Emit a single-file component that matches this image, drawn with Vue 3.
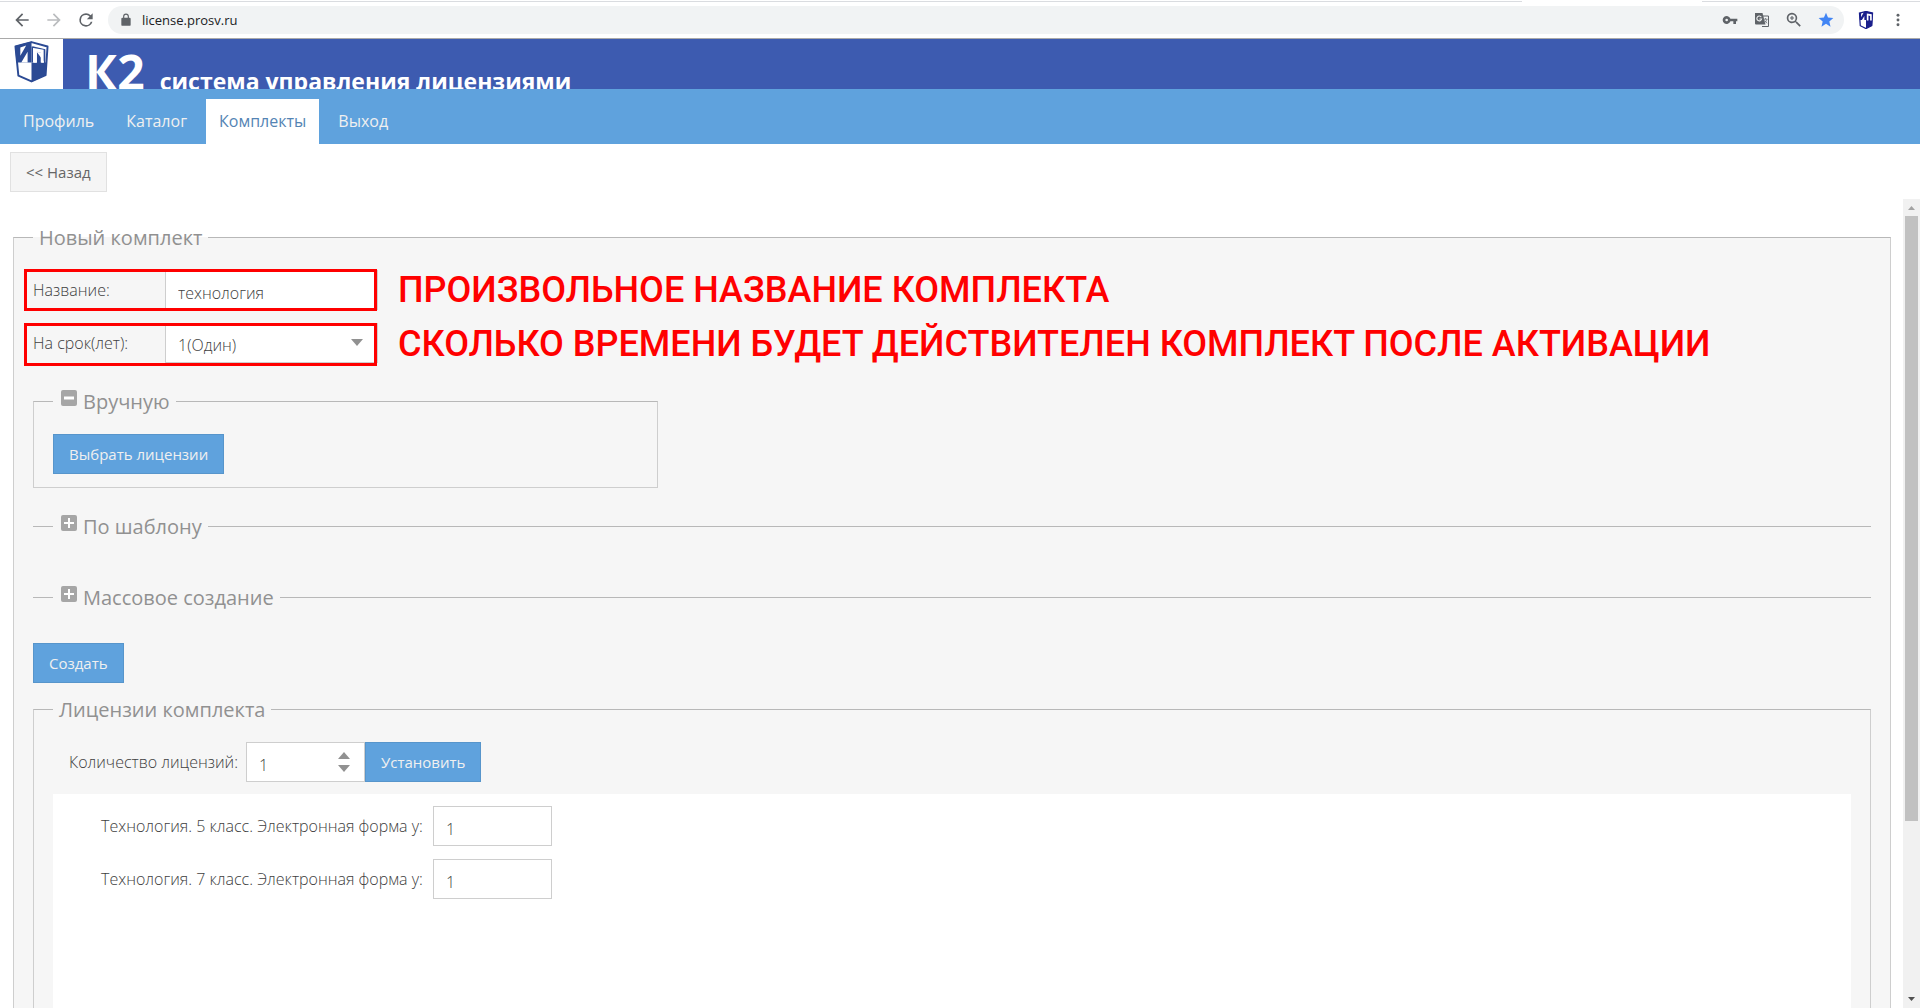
<script setup>
import { ref } from 'vue'

const tabs = ['Профиль', 'Каталог', 'Комплекты', 'Выход']
const active = ref('Комплекты')
const address = ref('license.prosv.ru')
const name = ref('технология')
const term = ref('1(Один)')
const count = ref('1')
const licenses = ref([
  { id: 'lic5', label: 'Технология. 5 класс. Электронная форма у:', value: '1' },
  { id: 'lic7', label: 'Технология. 7 класс. Электронная форма у:', value: '1' }
])
</script>

<template>
  <div class="page">
    <div class="browser">
      <div class="tabline"><span></span><span></span></div>
      <button class="tool" aria-label="Back"><svg viewBox="0 0 24 24" fill="#5f6368"><path d="M20 11H7.8l5.6-5.6L12 4l-8 8 8 8 1.4-1.4L7.8 13H20z" /></svg></button>
      <button class="tool" aria-label="Forward"><svg viewBox="0 0 24 24" fill="#babcbe"><path d="M12 4l-1.4 1.4 5.6 5.6H4v2h12.2l-5.6 5.6L12 20l8-8z" /></svg></button>
      <button class="tool" aria-label="Reload"><svg viewBox="0 0 24 24" fill="#5f6368"><path d="M17.65 6.35A7.96 7.96 0 0 0 12 4a8 8 0 1 0 7.73 10h-2.08A6 6 0 1 1 12 6c1.66 0 3.14.69 4.22 1.78L13 11h7V4z" /></svg></button>
      <div class="omnibox">
        <svg class="lock" viewBox="0 0 24 24" fill="#5f6368"><path d="M18 8h-1V6A5 5 0 0 0 7 6v2H6a2 2 0 0 0-2 2v10a2 2 0 0 0 2 2h12a2 2 0 0 0 2-2V10a2 2 0 0 0-2-2zM9 8V6a3 3 0 0 1 6 0v2z" /></svg>
        <input v-model="address" class="address" aria-label="Address" />
        <button class="mini" aria-label="Password"><svg viewBox="0 0 24 24" fill="#5f6368"><path d="M12.65 10A6 6 0 1 0 12.65 14H17v4h4v-4h2v-4zM7 14a2 2 0 1 1 0-4 2 2 0 0 1 0 4z" /></svg></button>
        <button class="mini" aria-label="Translate">
          <svg viewBox="0 0 16 16"><path d="M8 4h6.500v10.500H8" fill="#f1f3f4" stroke="#5f6368" /><path d="M1 1h7.500l3 11.500H2a1 1 0 0 1-1-1z" fill="#5f6368" /><path d="M7.300 5.200a2.400 2.400 0 1 0 .3 1.800H5.400" fill="none" stroke="#f1f3f4" stroke-width="1.100" /><path d="M9.500 7.200h4M11.500 6v1.200M13 7.200c-.4 1.800-1.600 3-2.600 3.800M10.800 8.500c.6 1.200 1.400 2 2.400 2.700" fill="none" stroke="#777b80" stroke-width=".9" /></svg>
        </button>
        <button class="mini" aria-label="Zoom"><svg viewBox="2 2 20 20" fill="#5f6368"><path d="M15.500 14h-.8l-.3-.3A6.500 6.500 0 1 0 13.700 14.400l.3.3v.8l5 5 1.500-1.500zM9.500 14a4.500 4.500 0 1 1 0-9 4.500 4.500 0 0 1 0 9zM10.200 7H8.800v1.800H7v1.400h1.800V12h1.400v-1.800H12V8.800h-1.800z" /></svg></button>
        <button class="mini" aria-label="Bookmark"><svg viewBox="0 0 24 24" fill="#4285f4"><path d="M12 17.800l6.800 4.300-1.800-7.900 6-5.300-8-.7L12 1 8.900 8.200l-8 .7 6.100 5.300-1.800 7.900z" /></svg></button>
      </div>
      <button class="ext" aria-label="Extension">
        <svg viewBox="0 0 36 44"><path d="M2 5 18 1l16 4-2 31-14 7L4 36z" fill="#fff" stroke="#1a1f8c" stroke-width="3" /><path d="M1 5 18 1V22H3zM18 1l17 4-2 31-15 7z" fill="#1a1f8c" /><path d="M6 6l6-2-6 11zM8 22l6-10v10zM20 23V6l12 2v15h-4V12l-4-1v12z" fill="#fff" /></svg>
      </button>
      <button class="dots" aria-label="Menu"><svg viewBox="0 0 24 24" fill="#5f6368"><circle cx="12" cy="5" r="2.200" /><circle cx="12" cy="12" r="2.200" /><circle cx="12" cy="19" r="2.200" /></svg></button>
    </div>

    <header class="header">
      <div class="logo">
        <svg viewBox="0 0 36 44">
          <path d="M1.500 5.500 18 1l16.500 4.500-2 29.500L18 41.500 4.500 35.500z" fill="#fff" stroke="#2b4a94" stroke-width="2" stroke-linejoin="round" />
          <path d="M1 5 18 .5V22H2.500z" fill="#2b4a94" />
          <path d="M6.500 6.500 12.500 4.500 6.500 15zM7.500 22 14 11v11z" fill="#fff" />
          <path d="M18 22h15.500l-1 13L18 42z" fill="#2b4a94" />
          <path d="M20 22V6.500L31.500 8.500V22h-3.500V12l-4.500-1v11z" fill="#fff" />
          <path d="M18 22V1.500M23.500 22.500V11l4.500 1v10.500zM31.500 22V8.500L20 6.500" fill="#2b4a94" stroke="none" />
          <path d="M18.800 22V5.500M31.500 22.500V9L19 6" fill="none" stroke="#2b4a94" stroke-width="1.500" />
          <path d="M20 22V7l10.500 2v13h-3V12l-4-1v11z" fill="#fff" />
        </svg>
      </div>
      <h1 class="brand"><span class="k2">К2</span><span class="sub">система управления лицензиями</span></h1>
    </header>

    <nav class="nav">
      <a v-for="t in tabs" :key="t" href="#" :class="['tab', { active: t === active }]" @click.prevent="active = t">{{ t }}</a>
    </nav>

    <div class="backbar"><button class="btn light">&lt;&lt; Назад</button></div>

    <div class="body">
      <main class="content">
        <fieldset class="box outer">
          <legend>Новый комплект</legend>

          <div class="line">
            <div class="field marked">
              <label for="name">Название:</label>
              <input id="name" v-model="name" class="text" />
            </div>
            <p class="note">ПРОИЗВОЛЬНОЕ НАЗВАНИЕ КОМПЛЕКТА</p>
          </div>
          <div class="line">
            <div class="field marked low">
              <label for="term">На срок(лет):</label>
              <select id="term" v-model="term" class="text"><option>1(Один)</option></select>
              <svg class="caret" viewBox="0 0 12 7"><path d="M0 0h12L6 7z" fill="#919191" /></svg>
            </div>
            <p class="note">СКОЛЬКО ВРЕМЕНИ БУДЕТ ДЕЙСТВИТЕЛЕН КОМПЛЕКТ ПОСЛЕ АКТИВАЦИИ</p>
          </div>

          <fieldset class="box manual">
            <legend>
              <button class="toggle" aria-label="Свернуть"><svg viewBox="0 0 16 16"><rect width="16" height="16" rx="2" fill="#a6a6a6" /><path d="M3 8h10" stroke="#fff" stroke-width="3" /></svg></button>Вручную
            </legend>
            <button class="btn">Выбрать лицензии</button>
          </fieldset>

          <fieldset class="box closed template">
            <legend>
              <button class="toggle" aria-label="Развернуть"><svg viewBox="0 0 16 16"><rect width="16" height="16" rx="2" fill="#a6a6a6" /><path d="M3 8h10M8 3v10" stroke="#fff" stroke-width="2" /></svg></button>По шаблону
            </legend>
          </fieldset>
          <fieldset class="box closed mass">
            <legend>
              <button class="toggle" aria-label="Развернуть"><svg viewBox="0 0 16 16"><rect width="16" height="16" rx="2" fill="#a6a6a6" /><path d="M3 8h10M8 3v10" stroke="#fff" stroke-width="2" /></svg></button>Массовое создание
            </legend>
          </fieldset>

          <button class="btn">Создать</button>

          <fieldset class="box set">
            <legend>Лицензии комплекта</legend>
            <div class="count">
              <label for="count">Количество лицензий:</label>
              <div class="spin">
                <input id="count" v-model="count" class="text" inputmode="numeric" />
                <div class="arrows">
                  <button aria-label="Больше"><svg viewBox="0 0 12 7"><path d="M0 7h12L6 0z" fill="#919191" /></svg></button>
                  <button aria-label="Меньше"><svg viewBox="0 0 12 7"><path d="M0 0h12L6 7z" fill="#919191" /></svg></button>
                </div>
              </div>
              <button class="btn">Установить</button>
            </div>
            <div class="panel">
              <div v-for="l in licenses" :key="l.id" class="lic">
                <label :for="l.id">{{ l.label }}</label>
                <input :id="l.id" v-model="l.value" class="text" inputmode="numeric" />
              </div>
            </div>
          </fieldset>
        </fieldset>
      </main>
      <div class="scroll">
        <svg viewBox="0 0 17 17"><path d="M5 11h7L8.500 7z" fill="#a3a3a3" /></svg>
        <div class="track"><div class="thumb"></div></div>
        <svg viewBox="0 0 17 17"><path d="M5 6h7L8.500 10z" fill="#505050" /></svg>
      </div>
    </div>
  </div>
</template>

<style>
body {
  overflow: hidden;
  background: #fff;
}
</style>

<style scoped>
* {
  box-sizing: border-box;
}
.page {
  display: flex;
  flex-direction: column;
  height: 100vh;
  overflow: hidden;
  font-family: "Open Sans", "Noto Sans", sans-serif;
  font-size: 16px;
  color: #404040;
}
svg {
  display: block;
}
button {
  font: inherit;
  padding: 0;
  border: 0;
  background: none;
}

/* browser bar */
.browser {
  position: relative;
  flex: none;
  display: flex;
  align-items: center;
  height: 39px;
  padding: 2px 10px 0 6px;
  border-bottom: 1px solid #a9a9a9;
}
.tabline {
  position: absolute;
  top: 1px;
  left: 0;
  right: 0;
  display: flex;
  justify-content: space-between;
}
.tabline span {
  height: 1px;
  width: 1522px;
  background: #dadce0;
}
.tabline span:last-child {
  width: 218px;
}
.tool {
  width: 32px;
  display: flex;
  justify-content: center;
}
.tool svg {
  width: 20px;
  height: 20px;
}
.omnibox {
  flex: 1;
  display: flex;
  align-items: center;
  height: 28px;
  margin-left: 6px;
  padding: 0 10px 0 11px;
  border-radius: 14px;
  background: #f1f3f4;
}
.lock {
  width: 14px;
  height: 14px;
}
.address {
  flex: 1;
  height: 28px;
  margin-left: 9px;
  padding: 0;
  border: 0;
  outline: 0;
  background: none;
  font-family: "Open Sans", sans-serif;
  font-size: 13px;
  color: #202124;
}
.mini {
  width: 16px;
  margin-left: 16px;
}
.mini svg {
  width: 16px;
  height: 16px;
}
.ext {
  width: 16px;
  margin: 0 8px 0 14px;
}
.ext svg {
  width: 16px;
  height: 18px;
}
.dots svg {
  width: 16px;
  height: 16px;
  margin: 0 4px 0 8px;
}

/* header */
.header {
  flex: none;
  display: flex;
  height: 50px;
  background: #3d5bb0;
  overflow: hidden;
}
.logo {
  width: 63px;
  padding: 2px 14px;
  background: #fff;
}
.logo svg {
  width: 35px;
  height: 43px;
}
.brand {
  display: flex;
  align-items: baseline;
  gap: 15px;
  margin: 0 0 0 22px;
  line-height: 66px;
  white-space: nowrap;
  color: #fff;
}
.k2 {
  font-size: 48px;
}
.sub {
  font-size: 23px;
}

/* tabs */
.nav {
  flex: none;
  display: flex;
  gap: 6px;
  height: 55px;
  padding: 10px 10px 0;
  background: #5fa2dd;
}
.tab {
  padding: 0 13px;
  font-size: 16px;
  line-height: 44px;
  color: #f0f0f0;
  text-decoration: none;
}
.tab.active {
  background: #fff;
  color: #5484b4;
}
.backbar {
  flex: none;
  height: 55px;
  padding: 8px 10px;
}
.btn {
  height: 40px;
  padding: 0 15px;
  border: 1px solid #5795cb;
  background: #5fa2dd;
  color: #f0f0f0;
  font-size: 15px;
  white-space: nowrap;
}
.btn.light {
  border-color: #e1e1e1;
  background: #f5f5f5;
  color: #666;
}

/* content */
.body {
  flex: 1;
  min-height: 0;
  display: flex;
}
.content {
  flex: 1;
  min-width: 0;
  padding: 25px 12px 0 13px;
  overflow: hidden;
}
.box {
  min-width: 0;
  margin: 0;
  padding: 0 19px;
  border: 1px solid #cecece;
  border-top-color: #b8b8b8;
}
.outer {
  height: 900px;
  background: #f6f6f6;
}
legend {
  padding: 0 6px;
  font-size: 20px;
  line-height: 27px;
  color: #919191;
}
.line {
  display: flex;
  height: 40px;
  margin: 19px 0 13px;
}
.line + .line {
  margin-top: 0;
}
.field {
  position: relative;
  flex: none;
  display: flex;
  width: 345px;
}
.field label {
  width: 132px;
}
label {
  font-weight: 300;
  line-height: 40px;
  white-space: nowrap;
}
.field .text {
  width: 213px;
}
.marked::after {
  content: "";
  position: absolute;
  inset: -1px 1px -1px -9px;
  border: 3px solid #f00;
  pointer-events: none;
}
.marked.low::after {
  inset: 0 1px -3px -9px;
}
.text {
  width: 119px;
  height: 40px;
  padding: 5px 12px 0;
  border: 1px solid #cecece;
  border-radius: 0;
  outline: 0;
  appearance: none;
  background: #fff;
  font-family: inherit;
  font-size: 16px;
  font-weight: 300;
  color: #404040;
}
select.text {
  padding-top: 4px;
}
.caret {
  position: absolute;
  right: 15px;
  top: 16px;
  width: 12px;
  height: 7px;
}
.note {
  margin: 0 0 0 20px;
  font: 500 36px/40px Roboto, sans-serif;
  white-space: nowrap;
  color: #f00;
}
.low + .note {
  line-height: 42px;
}
legend:has(.toggle) {
  display: flex;
  align-items: flex-start;
  gap: 6px;
  padding-left: 8px;
}
.toggle {
  padding-top: 2px;
}
.toggle svg {
  width: 16px;
  height: 16px;
}
.manual {
  width: 625px;
  margin-top: 25px;
  padding-top: 19px;
  padding-bottom: 13px;
}
.closed {
  height: 27px;
  padding: 0 20px;
  border-width: 1px 0 0;
}
.template {
  margin: 25px 0 44px;
}
.mass {
  margin-bottom: 32px;
}
.set {
  height: 400px;
  margin-top: 13px;
  padding-top: 19px;
}
.count {
  display: flex;
  padding-left: 16px;
}
.count label {
  width: 177px;
}
.spin {
  position: relative;
}
.spin .text {
  display: block;
}
.arrows {
  position: absolute;
  right: 15px;
  top: 10px;
  display: flex;
  flex-direction: column;
  gap: 6px;
}
.arrows svg {
  width: 12px;
  height: 7px;
}
.panel {
  display: flex;
  flex-direction: column;
  gap: 13px;
  height: 340px;
  margin-top: 12px;
  padding: 12px 48px;
  background: #fff;
}
.lic {
  display: flex;
}
.lic label {
  width: 332px;
}

/* scrollbar */
.scroll {
  flex: none;
  display: flex;
  flex-direction: column;
  width: 17px;
  background: #f1f1f1;
}
.scroll svg {
  flex: none;
  width: 17px;
  height: 17px;
}
.track {
  flex: 1;
  padding: 0 2px;
}
.thumb {
  height: 78%;
  background: #c1c1c1;
}
</style>
